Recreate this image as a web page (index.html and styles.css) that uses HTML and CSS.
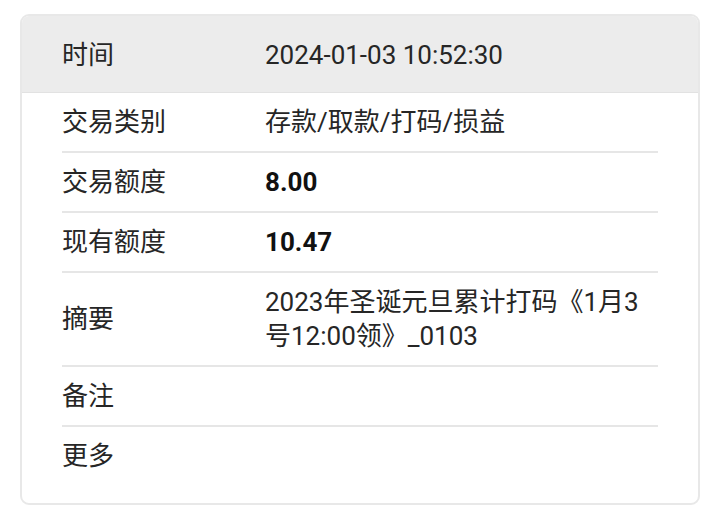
FILE: index.html
```html
<!DOCTYPE html>
<html lang="zh-CN">
<head>
<meta charset="utf-8">
<link rel="stylesheet" href="styles.css">
</head>
<body>
<div class="card">
  <div class="head">
    <div class="label">时间</div>
    <div class="value">2024-01-03 10:52:30</div>
  </div>
  <div class="rows">
    <div class="row"><div class="label">交易类别</div><div class="value">存款/取款/打码/损益</div></div>
    <div class="row"><div class="label">交易额度</div><div class="value bold">8.00</div></div>
    <div class="row"><div class="label">现有额度</div><div class="value bold">10.47</div></div>
    <div class="row"><div class="label">摘要</div><div class="value">2023年圣诞元旦累计打码《1月3号12:00领》_0103</div></div>
    <div class="row"><div class="label">备注</div><div class="value"></div></div>
    <div class="row last"><div class="label">更多</div><div class="value"></div></div>
  </div>
</div>
</body>
</html>
```
FILE: styles.css
```css
html, body {
  margin: 0;
  padding: 0;
  background: #ffffff;
}
body {
  padding: 14px 20px 6px 20px;
  font-family: Roboto, "Noto Sans CJK SC", sans-serif;
  font-size: 26px;
  color: #262626;
}
.card {
  width: 680px;
  box-sizing: border-box;
  border: 2px solid #e8e8e8;
  border-radius: 9px;
  overflow: hidden;
  background: #fff;
}
.head {
  display: flex;
  align-items: center;
  background: #ececec;
  padding: 22px 40px 20px 40px;
  line-height: 34px;
  border-bottom: 1px solid #e2e2e2;
}
.rows {
  padding: 0 40px 18px 40px;
}
.row {
  display: flex;
  align-items: center;
  padding: 12px 0;
  line-height: 34px;
  border-bottom: 2px solid #e6e6e6;
  min-height: 34px;
}
.row.last {
  border-bottom: none;
}
.label {
  width: 203px;
  flex: none;
}
.value {
  flex: 1;
  min-width: 0;
  padding-right: 14px;
}
.bold {
  font-weight: 700;
  color: #111;
}
```
